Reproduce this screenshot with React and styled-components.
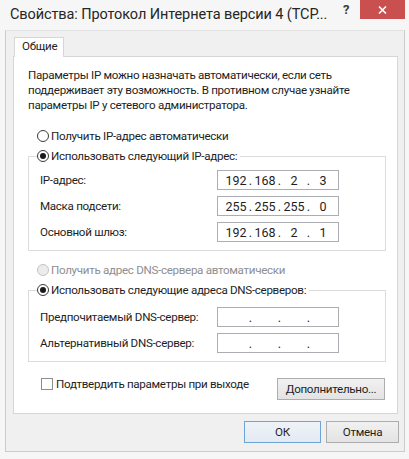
import React from "react";
import styled, { createGlobalStyle } from "styled-components";

const GlobalStyle = createGlobalStyle`
  html, body {
    margin: 0;
    padding: 0;
    background: #f6f6f6;
  }
  body {
    font-family: Roboto, "Noto Sans", sans-serif;
    font-size: 11.6px;
    letter-spacing: -0.3px;
    color: #1e1e1e;
  }
  * {
    box-sizing: border-box;
  }
`;

function App() {
  return (
    <Window>
      <GlobalStyle />
      <TitleBar>
        <Title>Свойства: Протокол Интернета версии 4 (TCP...</Title>
        <HelpButton>?</HelpButton>
        <CloseButton>
          <svg width="9" height="8" viewBox="0 0 9 8">
            <path d="M1 0.5 L8 7.5 M8 0.5 L1 7.5" stroke="#fff" strokeWidth="1.6" />
          </svg>
        </CloseButton>
      </TitleBar>
      <Client>
        <TabStrip>
          <Tab>Общие</Tab>
        </TabStrip>
        <Panel>
          <Description>
            Параметры IP можно назначать автоматически, если сеть
            <br />
            поддерживает эту возможность. В противном случае узнайте
            <br />
            параметры IP у сетевого администратора.
          </Description>

          <RadioRow $top={15}>
            <Radio />
            Получить IP-адрес автоматически
          </RadioRow>
          <Group $top={4} $padTop={6}>
            <Legend>
              <Radio $checked />
              Использовать следующий IP-адрес:
            </Legend>
            <Fields>
              <FieldLabel>IP-адрес:</FieldLabel>
              <IpBox parts={["192", "168", "2", "3"]} />
              <FieldLabel>Маска подсети:</FieldLabel>
              <IpBox parts={["255", "255", "255", "0"]} />
              <FieldLabel>Основной шлюз:</FieldLabel>
              <IpBox parts={["192", "168", "2", "1"]} />
            </Fields>
          </Group>

          <RadioRow $top={11} $disabled>
            <Radio $disabled />
            Получить адрес DNS-сервера автоматически
          </RadioRow>
          <Group $top={4} $padTop={9}>
            <Legend>
              <Radio $checked />
              Использовать следующие адреса DNS-серверов:
            </Legend>
            <Fields>
              <FieldLabel>Предпочитаемый DNS-сервер:</FieldLabel>
              <IpBox parts={["", "", "", ""]} />
              <FieldLabel>Альтернативный DNS-сервер:</FieldLabel>
              <IpBox parts={["", "", "", ""]} />
            </Fields>
          </Group>

          <PanelFooter>
            <CheckRow>
              <CheckBox />
              Подтвердить параметры при выходе
            </CheckRow>
            <Button $width={108} $offset={2}>
              Дополнительно...
            </Button>
          </PanelFooter>
        </Panel>
        <DialogButtons>
          <Button $width={77} $default>
            ОК
          </Button>
          <Button $width={73}>Отмена</Button>
        </DialogButtons>
      </Client>
    </Window>
  );
}

function IpBox({ parts }) {
  return (
    <IpInput>
      {parts.map((p, i) => (
        <React.Fragment key={i}>
          {i > 0 && <IpDot>.</IpDot>}
          <IpPart>{p}</IpPart>
        </React.Fragment>
      ))}
    </IpInput>
  );
}

export default App;

const Window = styled.div`
  width: 409px;
  height: 459px;
  background: #f6f6f6;
  display: flex;
  flex-direction: column;
  overflow: hidden;
`;

const TitleBar = styled.div`
  height: 30px;
  display: flex;
  align-items: flex-start;
  flex-shrink: 0;
`;

const Title = styled.div`
  flex: 1;
  padding: 5px 0 0 10px;
  font-size: 14.5px;
  letter-spacing: -0.1px;
  line-height: 19px;
  color: #262626;
  white-space: nowrap;
`;

const HelpButton = styled.div`
  width: 28px;
  height: 20px;
  padding-top: 2px;
  text-align: center;
  font-size: 13px;
  font-weight: bold;
  color: #3a3a3a;
`;

const CloseButton = styled.div`
  width: 45px;
  height: 19px;
  margin-right: 4px;
  background: #c9504f;
  display: flex;
  align-items: center;
  justify-content: center;
`;

const Client = styled.div`
  margin: 0 4px 0 5px;
  height: 422px;
  background: #f0f0f0;
  border: 1px solid #cbcbcb;
  border-top-color: #e2e2e2;
  padding: 6px 6px 0 7px;
  display: flex;
  flex-direction: column;
`;

const TabStrip = styled.div`
  display: flex;
  padding-left: 1px;
  position: relative;
  z-index: 1;
`;

const Tab = styled.div`
  width: 50px;
  height: 20px;
  margin-bottom: -1px;
  padding-left: 7px;
  background: #fff;
  border: 1px solid #d6d6d6;
  border-bottom: none;
  line-height: 17px;
`;

const Panel = styled.div`
  width: 385px;
  height: 358px;
  background: #fff;
  border: 1px solid #d6d6d6;
  padding: 11px 11px 0 14px;
  display: flex;
  flex-direction: column;
`;

const Description = styled.div`
  line-height: 15px;
  white-space: nowrap;
`;

const RadioRow = styled.div`
  display: flex;
  align-items: center;
  gap: 2px;
  height: 16px;
  margin-top: ${(p) => p.$top}px;
  padding-left: 9px;
  color: ${(p) => (p.$disabled ? "#8e8e8e" : "inherit")};
  white-space: nowrap;
`;

const Radio = styled.span`
  width: 12px;
  height: 12px;
  border-radius: 50%;
  border: 1px solid ${(p) => (p.$disabled ? "#c4c4c4" : "#3b3b3b")};
  background: ${(p) => (p.$disabled ? "#ececec" : "#fff")};
  display: inline-flex;
  align-items: center;
  justify-content: center;
  flex-shrink: 0;

  &::after {
    content: "";
    width: 6px;
    height: 6px;
    border-radius: 50%;
    background: #1a1a1a;
    display: ${(p) => (p.$checked ? "block" : "none")};
  }
`;

const Group = styled.fieldset`
  margin: ${(p) => p.$top}px 0 0;
  padding: ${(p) => p.$padTop}px 0 8px 11px;
  border: 1px solid #dcdcdc;
  min-width: 0;
`;

const Legend = styled.legend`
  display: flex;
  align-items: center;
  gap: 2px;
  height: 16px;
  margin-left: -3px;
  padding: 0 3px 0 0;
  white-space: nowrap;
`;

const Fields = styled.div`
  display: grid;
  grid-template-columns: 177px 122px;
  grid-auto-rows: 20px;
  row-gap: 6px;
  align-items: center;
`;

const FieldLabel = styled.div`
  white-space: nowrap;
`;

const IpInput = styled.div`
  height: 20px;
  border: 1px solid #abadb3;
  background: #fff;
  display: flex;
  align-items: center;
  padding-left: 6px;
  font-size: 12.5px;
  letter-spacing: 0;
`;

const IpPart = styled.span`
  width: 24px;
  text-align: center;
`;

const IpDot = styled.span`
  width: 5px;
  text-align: center;
`;

const PanelFooter = styled.div`
  display: flex;
  justify-content: space-between;
  align-items: flex-start;
  margin-top: 14px;
`;

const CheckRow = styled.div`
  display: flex;
  align-items: center;
  gap: 3px;
  height: 15px;
  padding-left: 13px;
  white-space: nowrap;
`;

const CheckBox = styled.span`
  width: 12px;
  height: 12px;
  border: 1px solid #8e8e8e;
  background: #fff;
  flex-shrink: 0;
`;

const Button = styled.div`
  width: ${(p) => p.$width}px;
  height: 22px;
  margin-top: ${(p) => p.$offset || 0}px;
  margin-right: 1px;
  display: flex;
  align-items: center;
  justify-content: center;
  border: 1px solid ${(p) => (p.$default ? "#6ea3d6" : "#adadad")};
  background: ${(p) =>
    p.$default
      ? "linear-gradient(#eef3f8, #e3eaf2)"
      : "linear-gradient(#f1f1f1, #e3e3e3)"};
  white-space: nowrap;
`;

const DialogButtons = styled.div`
  display: flex;
  justify-content: flex-end;
  gap: 4px;
  margin-top: 7px;
  margin-right: -2px;
`;
